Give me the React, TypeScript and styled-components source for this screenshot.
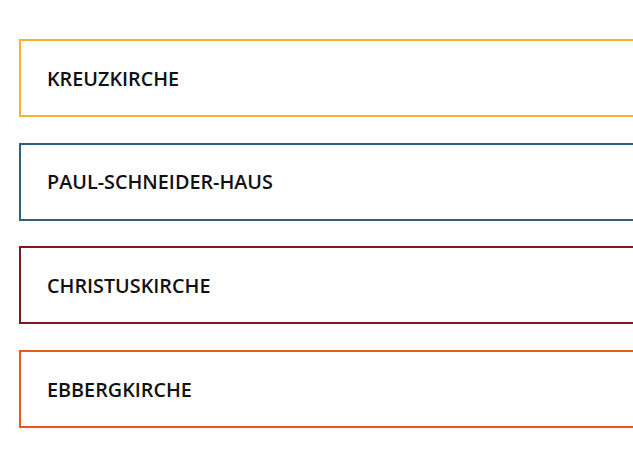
import React from 'react';
import { styled, createGlobalStyle } from 'styled-components';

const GlobalStyle = createGlobalStyle`
	html, body {
		margin: 0;
		padding: 0;
		background: #ffffff;
		font-family: 'Open Sans', 'Liberation Sans', sans-serif;
	}
`;

const churches = [
	{ name: 'KREUZKIRCHE', color: '#f9b234' },
	{ name: 'PAUL-SCHNEIDER-HAUS', color: '#2f5f82' },
	{ name: 'CHRISTUSKIRCHE', color: '#7d1a1d' },
	{ name: 'EBBERGKIRCHE', color: '#e8581b' },
];

export default function App() {
	return (
		<>
			<GlobalStyle />
			<ListWrap>
				{churches.map((church) => (
					<ChurchBox key={church.name} $color={church.color}>
						<ChurchTitle>{church.name}</ChurchTitle>
					</ChurchBox>
				))}
			</ListWrap>
		</>
	);
}

const ListWrap = styled.section`
	display: flex;
	flex-direction: column;
	gap: 25.7px;
	padding: 39px 0 0 19px;
	width: 660px;
	box-sizing: border-box;
`;

const ChurchBox = styled.article<{ $color: string }>`
	height: 78px;
	box-sizing: border-box;
	border: 2px solid ${(p) => p.$color};
	display: flex;
	align-items: center;
	padding-left: 26px;
`;

const ChurchTitle = styled.h3`
	margin: 0;
	font-size: 19.8px;
	font-weight: 600;
	color: #111111;
	letter-spacing: 0;
`;
